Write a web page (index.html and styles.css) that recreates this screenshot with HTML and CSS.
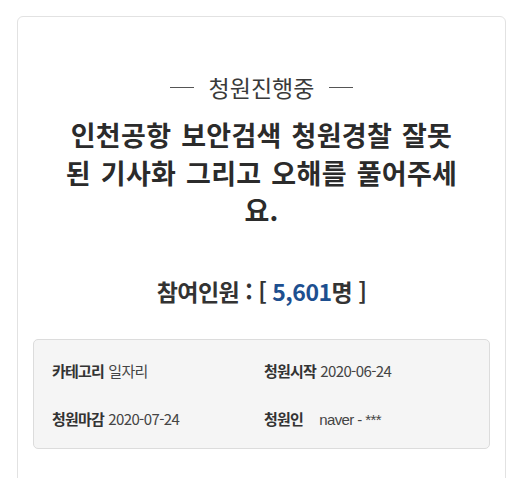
FILE: index.html
```html
<!DOCTYPE html>
<html lang="ko">
<head>
<meta charset="utf-8">
<link rel="stylesheet" href="styles.css">
</head>
<body>
<div class="card">
  <div class="status"><span class="dash"></span><span class="status-text">청원진행중</span><span class="dash"></span></div>
  <h1 class="title">인천공항 보안검색 청원경찰 잘못된 기사화 그리고 오해를 풀어주세요.</h1>
  <div class="count">참여인원 : [ <span class="num">5,601</span>명 ]</div>
  <div class="info">
    <div class="item"><span class="label">카테고리</span> <span class="value">일자리</span></div>
    <div class="item"><span class="label">청원시작</span> <span class="value">2020-06-24</span></div>
    <div class="item"><span class="label">청원마감</span> <span class="value">2020-07-24</span></div>
    <div class="item"><span class="label">청원인</span> <span class="value author">naver - ***</span></div>
  </div>
</div>
</body>
</html>
```
FILE: styles.css
```css
html, body {
  margin: 0;
  padding: 0;
  background: #ffffff;
}
body {
  font-family: "Noto Sans CJK KR", "Noto Sans", sans-serif;
  color: #333;
  overflow: hidden;
  height: 478px;
}
.card {
  margin: 16px 14px 0 17px;
  border: 1px solid #e2e2e2;
  border-radius: 6px;
  padding: 55px 15px 60px;
  background: #fff;
  min-height: 500px;
  box-sizing: border-box;
}
.status {
  display: flex;
  align-items: center;
  justify-content: center;
  gap: 15px;
  height: 30px;
  font-size: 23px;
  color: #3a3a3a;
}
.dash {
  display: inline-block;
  width: 24px;
  height: 1px;
  background: #555;
}
.title {
  margin: 14px auto 0;
  max-width: 404px;
  text-align: center;
  font-size: 27px;
  font-weight: 700;
  line-height: 37.5px;
  letter-spacing: 0.3px;
  word-spacing: 2px;
  color: #2b2b2b;
}
.count {
  margin-top: 47px;
  text-align: center;
  font-size: 23px;
  font-weight: 700;
  line-height: 30px;
  color: #333;
  letter-spacing: -0.5px;
}
.num {
  color: #1d4f8f;
}
.info {
  margin-top: 33px;
  background: #f5f5f5;
  border: 1px solid #dcdcdc;
  border-radius: 5px;
  padding: 21px 18px 18px;
  display: grid;
  grid-template-columns: 212px 1fr;
  row-gap: 28px;
  font-size: 15px;
  line-height: 20px;
}
.label {
  font-weight: 700;
  color: #333;
  letter-spacing: -0.8px;
}
.value {
  color: #444;
  letter-spacing: -0.6px;
}
.author {
  margin-left: 12px;
  font-family: "Liberation Sans", "Noto Sans", sans-serif;
  font-size: 15px;
}
```
